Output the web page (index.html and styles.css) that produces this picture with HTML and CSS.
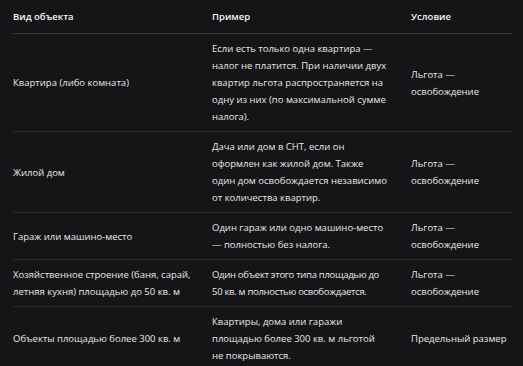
FILE: index.html
```html
<!DOCTYPE html>
<html lang="ru">
<head>
<meta charset="utf-8">
<link rel="stylesheet" href="styles.css">
</head>
<body>
<table class="tbl">
  <colgroup>
    <col class="c1"><col class="c2"><col class="c3">
  </colgroup>
  <thead>
    <tr><th>Вид объекта</th><th>Пример</th><th>Условие</th></tr>
  </thead>
  <tbody>
    <tr>
      <td>Квартира (либо комната)</td>
      <td>Если есть только одна квартира — налог не платится. При наличии двух квартир льгота распространяется на одну из них (по максимальной сумме налога).</td>
      <td>Льгота — освобождение</td>
    </tr>
    <tr>
      <td>Жилой дом</td>
      <td>Дача или дом в СНТ, если он оформлен как жилой дом. Также один дом освобождается независимо от количества квартир.</td>
      <td>Льгота — освобождение</td>
    </tr>
    <tr>
      <td>Гараж или машино-место</td>
      <td>Один гараж или одно машино-место — полностью без налога.</td>
      <td>Льгота — освобождение</td>
    </tr>
    <tr>
      <td>Хозяйственное строение (баня, сарай, летняя кухня) площадью до 50 кв. м</td>
      <td class="tight">Один объект этого типа площадью до 50 кв. м полностью освобождается.</td>
      <td>Льгота — освобождение</td>
    </tr>
    <tr>
      <td>Объекты площадью более 300 кв. м</td>
      <td>Квартиры, дома или гаражи площадью более 300 кв. м льготой не покрываются.</td>
      <td>Предельный размер</td>
    </tr>
  </tbody>
</table>
</body>
</html>
```
FILE: styles.css
```css
html, body {
  margin: 0;
  padding: 0;
  background: #151517;
}
body {
  padding: 0 10px 0 13px;
  font-family: "Open Sans", "Noto Sans", sans-serif;
  font-size: 9.5px;
  line-height: 17px;
  color: #e8e8e8;
}
.tbl {
  width: 500px;
  border-collapse: collapse;
  table-layout: fixed;
}
.c1 { width: 199px; }
.c2 { width: 199px; }
.c3 { width: 102px; }
.tbl th {
  text-align: left;
  font-weight: 600;
  color: #f4f4f4;
  padding: 8px 12px 8px 0;
  border-bottom: 1px solid #38383b;
}
.tbl td {
  vertical-align: middle;
  padding: 6px 12px 6px 0;
  border-bottom: 1px solid #2a2a2d;
}
.tbl td:nth-child(2) { padding-right: 24px; }
.tbl td.tight { letter-spacing: -0.3px; }
.tbl th:last-child,
.tbl td:last-child { padding-right: 0; }
```
